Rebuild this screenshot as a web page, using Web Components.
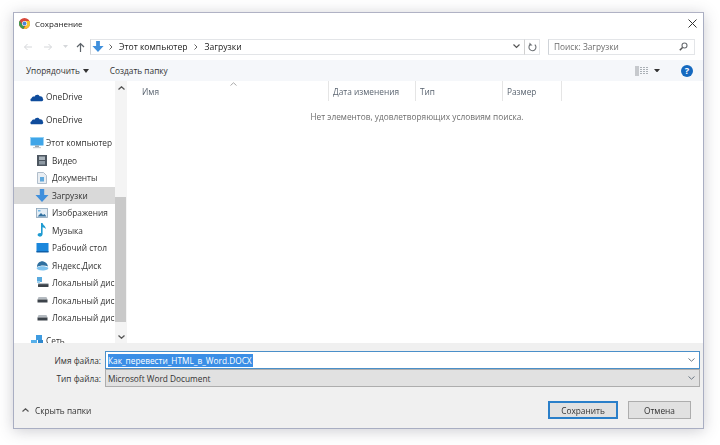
<!DOCTYPE html>
<html lang="ru">
<head>
<meta charset="utf-8">
<title>Сохранение</title>
<style>
  html, body { margin: 0; height: 100%; background: #fff; }
  body { font: 8.3px "Open Sans", "Noto Sans", sans-serif; color: #333; padding: 12px 16px 16px 13px; box-sizing: border-box; }
</style>
</head>
<body>
<save-dialog>
  <title-bar slot="title">Сохранение</title-bar>
  <nav-bar slot="nav"></nav-bar>
  <tool-bar slot="tools"></tool-bar>
  <folder-tree slot="tree">
    <tree-item icon="cloud" level="0" style="margin-bottom:5.5px">OneDrive</tree-item>
    <tree-item icon="cloud" level="0" style="margin-bottom:5.5px">OneDrive</tree-item>
    <tree-item icon="pc" level="0">Этот компьютер</tree-item>
    <tree-item icon="video">Видео</tree-item>
    <tree-item icon="doc">Документы</tree-item>
    <tree-item icon="down" selected>Загрузки</tree-item>
    <tree-item icon="image">Изображения</tree-item>
    <tree-item icon="music">Музыка</tree-item>
    <tree-item icon="desktop">Рабочий стол</tree-item>
    <tree-item icon="yadisk">Яндекс.Диск</tree-item>
    <tree-item icon="sysdisk">Локальный дис</tree-item>
    <tree-item icon="disk">Локальный дис</tree-item>
    <tree-item icon="disk">Локальный дис</tree-item>
    <tree-item icon="net" level="0" style="margin-top:5.5px">Сеть</tree-item>
  </folder-tree>
  <file-list slot="list">Нет элементов, удовлетворяющих условиям поиска.</file-list>
  <form-panel slot="form"></form-panel>
</save-dialog>

<script>
  const ICONS = {
    cloud: '<svg width="14" height="10" viewBox="0 0 14 10"><path fill="#0f4c9c" d="M1 9.2C.2 8.6 0 6.8 1.6 6.3 2 4.600 3.600 4.400 4.400 4.800 5.200 2.400 8.400 1.800 9.600 4.200c2-.4 3.400 1 3.200 2.400.8.6.6 2.600-.8 2.600z"/></svg>',
    pc: '<svg width="14" height="12" viewBox="0 0 14 12"><rect x=".5" y="0" width="13" height="8.500" fill="#3fa5e8"/><rect x=".5" y="0" width="13" height="1" fill="#8fd0f5"/><rect x="5" y="8.500" width="4" height="1.500" fill="#9aa5ad"/><rect x="3" y="10" width="8" height="1.200" fill="#c5ccd2"/></svg>',
    video: '<svg width="10" height="11" viewBox="0 0 10 11"><rect width="10" height="11" fill="#4d5660"/><rect x="2" y="1.500" width="6" height="3.500" fill="#aab4bc"/><rect x="2" y="6" width="6" height="3.500" fill="#8e99a3"/></svg>',
    doc: '<svg width="10" height="12" viewBox="0 0 10 12"><path fill="#e9eef3" stroke="#9fb0bf" stroke-width=".8" d="M.5.5h6l3 3v8h-9z"/><rect x="3" y="5" width="4" height="4.500" fill="#5fa8dc"/></svg>',
    down: '<svg width="14" height="13" viewBox="0 0 14 13"><path fill="#3f8fdc" d="M4.800 0h4.400v6h4.300L7 13 .5 6h4.300z"/></svg>',
    image: '<svg width="12" height="10" viewBox="0 0 12 10"><rect x=".5" y=".5" width="11" height="9" fill="#e3edf5" stroke="#8aa3b8" stroke-width=".8"/><path fill="#2f6f9f" d="M1.500 8.500 5 5l2 2 1.500-1 2 2.500z"/><rect x="2" y="2" width="2.500" height="1.500" fill="#6fb6e6"/></svg>',
    music: '<svg width="10" height="14" viewBox="0 0 10 14"><path fill="#1f9bd1" d="M4 0h1.600c.3 2.500 3.600 2.800 3 6.200C8 4.800 6.600 4.400 5.600 4.200V11c0 1.800-1.700 2.800-3.300 2.600C.4 13.300.1 11.600 1.300 10.600 2.100 9.900 3.200 9.800 4 10.200z"/></svg>',
    desktop: '<svg width="13" height="10" viewBox="0 0 13 10"><rect x=".5" y="0" width="12" height="9" fill="#1b87dc"/><rect x=".5" y="8" width="12" height="1.500" fill="#0f5fa8"/></svg>',
    yadisk: '<svg width="13" height="11" viewBox="0 0 13 11"><path fill="#2f6f9f" d="M1 7C1 3 4.500.8 7.500 1.500 10 2 11.500 4 12 6.500 9 5 4.500 5 1 7z"/><path fill="#7fc3ef" d="M.5 8c2-2.200 9.500-2.200 12 0-.5 1.500-2 2.500-6 2.500S1 9.500.5 8z"/></svg>',
    sysdisk: '<svg width="13" height="11" viewBox="0 0 13 11"><rect x="1" y="0" width="5" height="5" fill="#59a9dd"/><rect x="1" y="4" width="3" height="2" fill="#9bd0f0"/><rect x="2" y="7" width="10.500" height="3" rx=".5" fill="#3c434a"/><rect x="2" y="6.200" width="10.500" height="1" fill="#aab1b7"/></svg>',
    disk: '<svg width="11" height="6" viewBox="0 0 11 6"><path fill="#b5bbc1" d="M1.500 0h8l1 2.500H.5z"/><rect x=".5" y="2.500" width="10" height="3" fill="#3c434a"/></svg>',
    net: '<svg width="14" height="12" viewBox="0 0 14 12"><rect x="6" y="0" width="6" height="5" fill="#3f9be0"/><rect x="1" y="5" width="6" height="5" fill="#57b0ea"/><rect x="8" y="5" width="5" height="5" fill="#2f87cc"/></svg>'
  };

  class SaveDialog extends HTMLElement {
    constructor() {
      super();
      this.attachShadow({mode: 'open'}).innerHTML = `
        <style>
          :host {
            display: flex; flex-direction: column; height: 100%; box-sizing: border-box;
            background: #fff; border: 1px solid #a9aec2; border-top-color: #b0b2c4;
            box-shadow: 0 2px 14px rgba(60, 60, 80, .26);
            filter: blur(.3px);
          }
          #main { flex: 1; display: flex; min-height: 0; }
        </style>
        <slot name="title"></slot>
        <slot name="nav"></slot>
        <slot name="tools"></slot>
        <div id="main"><slot name="tree"></slot><slot name="list"></slot></div>
        <slot name="form"></slot>`;
    }
  }

  class TitleBar extends HTMLElement {
    constructor() {
      super();
      this.attachShadow({mode: 'open'}).innerHTML = `
        <style>
          :host { display: flex; align-items: center; height: 20px; margin-bottom: 5px; padding: 0 6px 0 5px; font-size: 8px; color: #222; }
          svg { display: block; }
          #name { flex: 1; margin-left: 5px; }
        </style>
        <svg width="11" height="11" viewBox="0 0 22 22">
          <circle cx="11" cy="11" r="11" fill="#d8483b"/>
          <path fill="#f4c430" d="M11 6h9.900A11 11 0 0 1 9 21.800l5.500-8z"/>
          <path fill="#3e9b4f" d="M1.500 5.400 7 14l4 3 -2 4.800A11 11 0 0 1 1.500 5.400z"/>
          <circle cx="11" cy="11" r="5" fill="#fff"/><circle cx="11" cy="11" r="3.800" fill="#4a86d8"/>
        </svg>
        <span id="name"><slot></slot></span>
        <svg width="9" height="9" viewBox="0 0 9 9"><path d="M.5.5l8 8M8.500.5l-8 8" stroke="#333" fill="none"/></svg>`;
    }
  }

  class NavBar extends HTMLElement {
    constructor() {
      super();
      this.attachShadow({mode: 'open'}).innerHTML = `
        <style>
          :host { display: flex; align-items: center; height: 17px; margin-bottom: 5px; padding-left: 9px; color: #222; }
          svg { display: block; flex: none; }
          #arrows { display: flex; align-items: center; width: 67px; }
          #addr {
            width: 434px; height: 16px; box-sizing: border-box; border: 1px solid #e3e5e8; border-right: 0; border-left-color: #cfd3d8;
            display: flex; align-items: center; padding-left: 1px;
          }
          #grow { flex: 1; }
          #refresh { width: 16px; height: 16px; box-sizing: border-box; border: 1px solid #e3e5e8; border-left-color: #d0d0d0; display: flex; align-items: center; justify-content: center; }
          #search {
            width: 147px; height: 16px; box-sizing: border-box; margin-left: 8px; border: 1px solid #e3e5e8; border-left-color: #cfd3d8;
            display: flex; align-items: center; padding: 0 6px 0 5px; color: #6d6d6d;
          }
          #search span { flex: 1; }
        </style>
        <div id="arrows">
          <svg width="10" height="8" viewBox="0 0 10 8"><path d="M9 4H1.500M4.500 1 1.500 4l3 3" stroke="#d5d7da" fill="none"/></svg>
          <svg width="10" height="8" viewBox="0 0 10 8" style="margin-left:10px"><path d="M1 4h7.500M5.500 1l3 3-3 3" stroke="#d5d7da" fill="none"/></svg>
          <svg width="5" height="3" viewBox="0 0 5 3" style="margin-left:10px"><path d="M0 0h5L2.500 3z" fill="#d5d7da"/></svg>
          <svg width="9" height="10" viewBox="0 0 9 10" style="margin-left:8px"><path d="M4.500 10V1.500M1 5l3.500-3.500L8 5" stroke="#5d6369" stroke-width="1.200" fill="none"/></svg>
        </div>
        <div id="addr">
          <svg width="12" height="13" viewBox="0 0 14 13"><path fill="#3f8fdc" d="M4.800 0h4.400v6h4.300L7 13 .5 6h4.300z"/></svg>
          <svg width="4" height="6" viewBox="0 0 4 6" style="margin-left:5px"><path d="M.5.500 3 3 .5 5.500" stroke="#666" fill="none"/></svg>
          <span style="margin-left:6px;font-size:8.600px">Этот компьютер</span>
          <svg width="4" height="6" viewBox="0 0 4 6" style="margin-left:7px"><path d="M.5.500 3 3 .5 5.500" stroke="#666" fill="none"/></svg>
          <span style="margin-left:6px;font-size:8.600px">Загрузки</span>
          <span id="grow"></span>
          <svg width="7" height="5" viewBox="0 0 7 5" style="margin-right:4px"><path d="M.5.500 3.500 3.500 6.500.5" stroke="#555" stroke-width="1.200" fill="none"/></svg>
        </div>
        <div id="refresh">
          <svg width="9" height="10" viewBox="0 0 9 10"><path d="M6.800 2.600A3.500 3.500 0 1 1 2 2.700" stroke="#6b6f73" stroke-width="1.100" fill="none"/><path d="M1.500 .5v3h3z" fill="#6b6f73"/></svg>
        </div>
        <div id="search">
          <span>Поиск: Загрузки</span>
          <svg width="9" height="9" viewBox="0 0 9 9"><circle cx="5.500" cy="3.500" r="2.500" stroke="#6b6f73" stroke-width="1.100" fill="none"/><path d="M3.500 5.500 .8 8.200" stroke="#555" stroke-width="1.500"/></svg>
        </div>`;
    }
  }

  class ToolBar extends HTMLElement {
    constructor() {
      super();
      this.attachShadow({mode: 'open'}).innerHTML = `
        <style>
          :host { display: flex; align-items: center; height: 21px; padding: 0 10px 0 12px; background: #f5f7fa; color: #333; }
          svg { display: block; flex: none; }
          #grow { flex: 1; }
        </style>
        <span>Упорядочить</span>
        <svg width="6" height="4" viewBox="0 0 6 4" style="margin-left:3px"><path d="M0 0h6L3 4z" fill="#333"/></svg>
        <span style="margin-left:21px">Создать папку</span>
        <span id="grow"></span>
        <svg width="13" height="10" viewBox="0 0 13 10"><rect x="0" y="0" width="4" height="10" fill="#c6c9cd"/><path d="M5 1.500h8M5 3.500h8M5 5.500h8M5 7.500h8" stroke="#aab0b6" stroke-dasharray="2 1"/></svg>
        <svg width="6" height="3.500" viewBox="0 0 6 3.500" style="margin-left:6px"><path d="M0 0h6L3 3.500z" fill="#333"/></svg>
        <svg width="12" height="12" viewBox="0 0 13 13" style="margin-left:21px"><circle cx="6.500" cy="6.500" r="6.500" fill="#1569bf"/><text x="6.500" y="10" text-anchor="middle" font-family="Open Sans" font-weight="700" font-size="10" fill="#fff">?</text></svg>`;
    }
  }

  class FolderTree extends HTMLElement {
    constructor() {
      super();
      this.attachShadow({mode: 'open'}).innerHTML = `
        <style>
          :host { display: flex; flex: none; width: 113px; height: 100%; overflow: hidden; }
          #rows { width: 101px; padding-top: 7px; overflow: hidden; }
          #bar { width: 12px; background: #f4f4f4; display: flex; flex-direction: column; align-items: center; }
          #thumb { width: 11px; align-self: flex-start; height: 125px; background: #c9c9c9; margin-top: 107px; }
          svg { display: block; flex: none; }
        </style>
        <div id="rows"><slot></slot></div>
        <div id="bar">
          <svg width="7" height="4" viewBox="0 0 7 4" style="margin-top:5px"><path d="M.5 3.500 3.500.8l3 2.700" stroke="#555" stroke-width="1.300" fill="none"/></svg>
          <div id="thumb"></div>
          <svg width="7" height="4" viewBox="0 0 7 4" style="margin-top:13px"><path d="M.5.500l3 2.700 3-2.700" stroke="#555" stroke-width="1.300" fill="none"/></svg>
        </div>`;
    }
  }

  class TreeItem extends HTMLElement {
    connectedCallback() {
      if (this.shadowRoot) return;
      const root = this.getAttribute('level') === '0';
      this.attachShadow({mode: 'open'}).innerHTML = `
        <style>
          :host { display: flex; align-items: center; height: 17.5px; white-space: nowrap; color: #333; overflow: hidden; }
          :host([selected]) { background: #d9d9d9; }
          #ico { flex: none; width: 16px; margin: 0 ${root ? 1 : 2}px 0 ${root ? 15 : 20}px; display: flex; justify-content: center; align-items: center; }
          #txt { flex: none; }
          svg { display: block; }
        </style>
        <span id="ico">${ICONS[this.getAttribute('icon')]}</span>
        <span id="txt"><slot></slot></span>`;
    }
  }

  class FileList extends HTMLElement {
    constructor() {
      super();
      this.attachShadow({mode: 'open'}).innerHTML = `
        <style>
          :host { display: flex; flex-direction: column; flex: 1; min-width: 0; color: #6d6d6d; position: relative; }
          #head { display: flex; height: 20px; align-items: center; color: #5a6470; }
          .col { height: 100%; display: flex; align-items: center; box-sizing: border-box; padding-left: 4px; border-right: 1px solid #e5e5e5; }
          #caret { position: absolute; left: 103px; top: 1px; }
          #msg { text-align: center; margin-top: 10px; padding-left: 4px; }
        </style>
        <div id="head">
          <div class="col" style="width:201px;padding-left:15px;border-right:0;">Имя</div>
          <div class="col" style="width:88px;border-left:1px solid #e5e5e5;">Дата изменения</div>
          <div class="col" style="width:87px;">Тип</div>
          <div class="col" style="width:59px;">Размер</div>
        </div>
        <svg id="caret" width="7" height="4" viewBox="0 0 7 4"><path d="M.5 3.500 3.500.8l3 2.700" stroke="#aaa" fill="none"/></svg>
        <div id="msg"><slot></slot></div>`;
    }
  }

  class FormField extends HTMLElement {
    connectedCallback() {
      if (this.shadowRoot) return;
      const active = this.hasAttribute('active');
      const value = this.getAttribute('value');
      this.attachShadow({mode: 'open'}).innerHTML = `
        <style>
          :host { display: flex; align-items: center; height: 18px; }
          label { width: 87px; text-align: right; color: #333; }
          #box {
            flex: 1; margin-left: 4px; height: 100%; box-sizing: border-box; display: flex; align-items: center; padding: 0 4px 0 2px;
            border: 1px solid ${active ? '#4a8fc9' : '#adadad'}; background: ${active ? '#fff' : '#e1e1e1'}; color: #333;
          }
          #grow { flex: 1; }
          mark { background: #3a8ee6; color: #fff; padding: 0 1px 0 0; line-height: 13px; }
          svg { display: block; }
        </style>
        <label>${this.getAttribute('label')}</label>
        <div id="box">
          ${active ? `<mark>${value}</mark>` : `<span>${value}</span>`}
          <span id="grow"></span>
          <svg width="7" height="4" viewBox="0 0 7 4"><path d="M.5.500l3 2.700 3-2.700" stroke="#6f7a85" fill="none"/></svg>
        </div>`;
    }
  }

  class DlgButton extends HTMLElement {
    constructor() {
      super();
      this.attachShadow({mode: 'open'}).innerHTML = `
        <style>
          :host {
            display: flex; align-items: center; justify-content: center; height: 18px; box-sizing: border-box;
            background: #e1e1e1; border: 1px solid #adadad; color: #333;
          }
          :host([primary]) { border: 2px solid #2a7fc9; }
        </style>
        <slot></slot>`;
    }
  }

  class FormPanel extends HTMLElement {
    constructor() {
      super();
      this.attachShadow({mode: 'open'}).innerHTML = `
        <style>
          :host { display: block; flex: none; height: 85px; box-sizing: border-box; background: #f0f0f0; padding: 8px 3px 0 0; }
          #fields { display: flex; flex-direction: column; }
          #foot { display: flex; align-items: center; margin-top: 14px; padding-right: 9px; }
          #toggle { flex: 1; display: flex; align-items: center; padding-left: 8px; color: #333; }
          svg { display: block; margin-right: 6px; }
          dlg-button:first-of-type { width: 70px; }
          dlg-button:last-of-type { width: 63px; margin-left: 10px; }
        </style>
        <div id="fields">
          <form-field active label="Имя файла:" value="Как_перевести_HTML_в_Word.DOCX"></form-field>
          <form-field label="Тип файла:" value="Microsoft Word Document"></form-field>
        </div>
        <div id="foot">
          <div id="toggle">
            <svg width="7" height="4" viewBox="0 0 7 4"><path d="M.5 3.500 3.500.8l3 2.700" stroke="#555" stroke-width="1.200" fill="none"/></svg>
            Скрыть папки
          </div>
          <dlg-button primary>Сохранить</dlg-button>
          <dlg-button>Отмена</dlg-button>
        </div>`;
    }
  }

  customElements.define('save-dialog', SaveDialog);
  customElements.define('title-bar', TitleBar);
  customElements.define('nav-bar', NavBar);
  customElements.define('tool-bar', ToolBar);
  customElements.define('folder-tree', FolderTree);
  customElements.define('tree-item', TreeItem);
  customElements.define('file-list', FileList);
  customElements.define('form-field', FormField);
  customElements.define('dlg-button', DlgButton);
  customElements.define('form-panel', FormPanel);
</script>
</body>
</html>
